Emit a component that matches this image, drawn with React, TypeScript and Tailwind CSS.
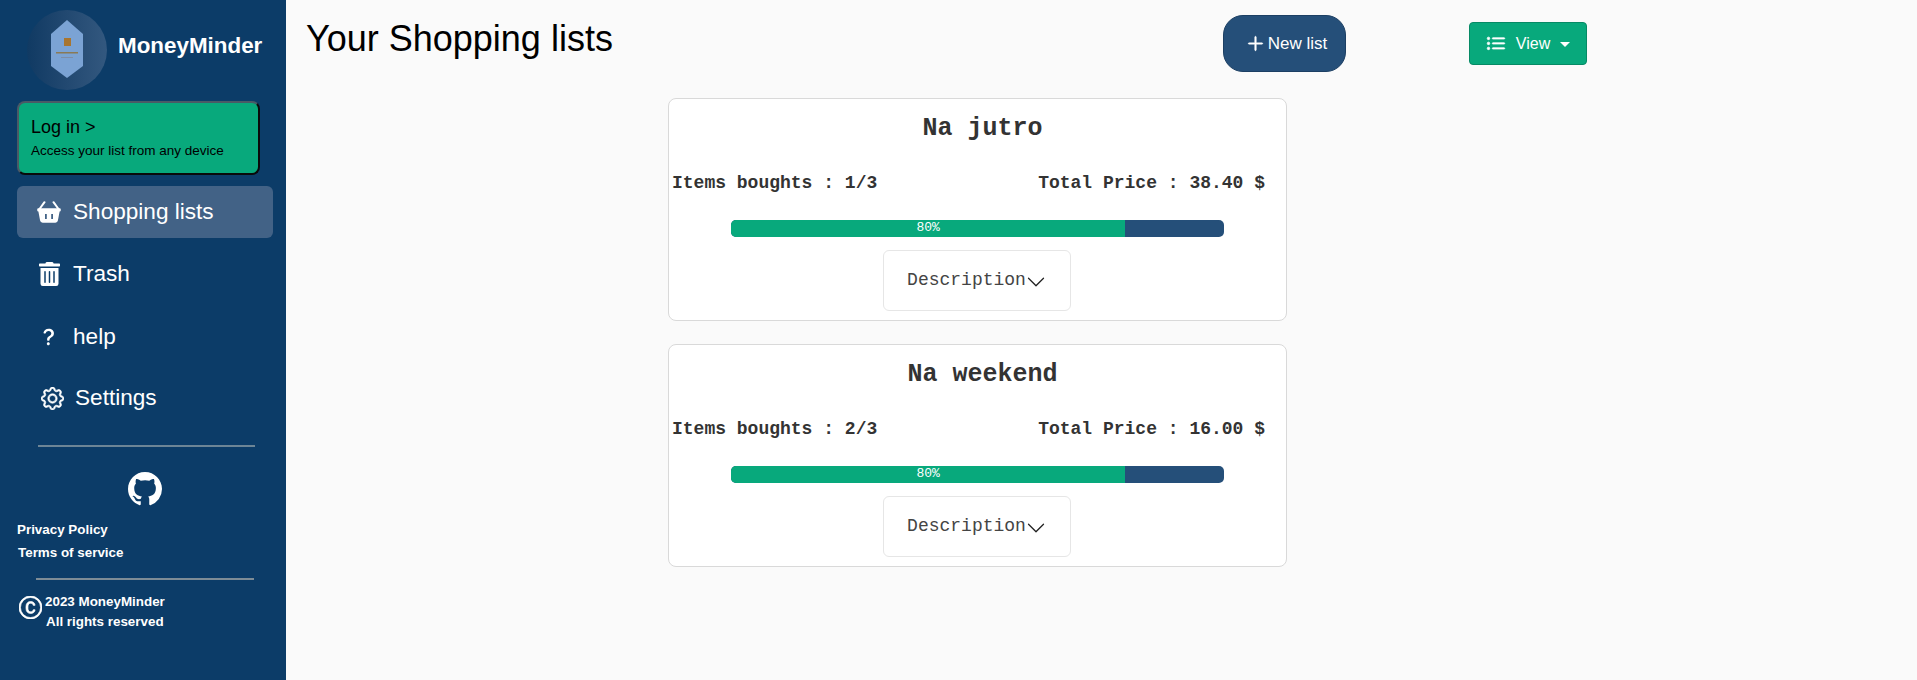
import { BsGear, BsPlusLg, BsListUl, BsChevronDown, BsGithub, BsCCircle, BsQuestionLg } from "react-icons/bs";
import { FaTrashAlt } from "react-icons/fa";

const lists = [
  { name: "Na jutro", items: "1/3", price: "38.40" },
  { name: "Na weekend", items: "2/3", price: "16.00" },
];

function BasketIcon() {
  return (
    <svg width="24" height="22" viewBox="0 0 24 22" fill="none">
      <path d="M2.5 8 L7.5 1.2 M21.5 8 L16.5 1.2" stroke="white" strokeWidth="2" strokeLinecap="round" />
      <path
        fillRule="evenodd"
        fill="white"
        d="M1.5 7.2 H22.5 A1.3 1.3 0 0 1 23.8 8.5 V9.2 A1.3 1.3 0 0 1 22.6 10.5 L20.9 19.6 A2.6 2.6 0 0 1 18.4 21.8 H5.6 A2.6 2.6 0 0 1 3.1 19.6 L1.4 10.5 A1.3 1.3 0 0 1 0.2 9.2 V8.5 A1.3 1.3 0 0 1 1.5 7.2 Z M8 13 H9.8 V18 H8 Z M14.2 13 H16 V18 H14.2 Z"
      />
    </svg>
  );
}

function Card({ name, items, price }: { name: string; items: string; price: string }) {
  return (
    <div className="w-[619px] h-[223px] bg-white border border-[#d9d9d9] rounded-[8px] flex flex-col items-center text-[#333] font-['Liberation_Mono',monospace]">
      <div className="mt-[15px] pl-[10px] h-[30px] leading-[30px] text-[25px] font-bold">{name}</div>
      <div className="mt-[28px] w-full h-[22px] leading-[22px] flex justify-between pl-[3px] pr-[21px] text-[18px] font-bold">
        <span>Items boughts : {items}</span>
        <span>Total Price : {price} $</span>
      </div>
      <div className="mt-[26px] w-[493px] h-[17px] rounded-[5px] overflow-hidden bg-[#254f79] flex">
        <div className="w-[80%] bg-[#08a97c] text-white text-[13px] leading-[15px] text-center">80%</div>
      </div>
      <div className="mt-[13px] mr-[2px] w-[188px] h-[61px] border border-[#e6e6e6] rounded-[6px] flex items-center justify-center text-[18px] text-[#444]">
        <span>Description</span>
        <BsChevronDown className="w-[20px] h-[20px] mt-[2px] text-[#222]" />
      </div>
    </div>
  );
}

function NavItem({ icon, label, active }: { icon: React.ReactNode; label: string; active?: boolean }) {
  return (
    <div className={`ml-[17px] w-[256px] h-[52px] rounded-[6px] flex items-center text-white text-[22.6px] ${active ? "bg-[#426286]" : ""}`}>
      <div className="w-[56px] flex justify-center pl-[8px]">{icon}</div>
      <span className="leading-[28px]">{label}</span>
    </div>
  );
}

export default function App() {
  return (
    <div className="flex w-[1917px] h-[680px] overflow-hidden bg-[#fafafa] font-['Liberation_Sans',Arial,sans-serif]">
      <aside className="w-[286px] h-full bg-[#0c3c68] flex flex-col shrink-0">
        <div className="flex items-center h-[101px] pl-[27px] pb-[2px]">
          <div className="w-[80px] h-[80px] rounded-full bg-gradient-to-r from-[#103a63] to-[#33587f] flex items-center justify-center shrink-0">
            <svg width="34" height="60" viewBox="0 0 34 60">
              <polygon points="17,0 33,14 33,46 17,58 1,46 1,14" fill="#7ba3d4" />
              <rect x="14" y="18" width="7" height="8" fill="#a8752f" />
              <rect x="6" y="32" width="22" height="1.5" fill="#8a7a55" />
              <rect x="11" y="37" width="12" height="1" fill="#7d8ea8" />
            </svg>
          </div>
          <span className="ml-[11px] mb-[7px] text-white text-[22.4px] font-bold">MoneyMinder</span>
        </div>
        <div className="ml-[17px] w-[243px] h-[74px] rounded-[8px] bg-[#08a97c] border-2 border-t-[#4a5a66] border-l-[#4a5a66] border-r-[#0a0a0a] border-b-[#0a0a0a] px-[12px] pt-[13px] text-black">
          <div className="text-[18px] leading-[22px]">Log in &gt;</div>
          <div className="text-[13.5px] leading-[16px] mt-[5px]">Access your list from any device</div>
        </div>
        <div className="mt-[11px]">
          <NavItem active icon={<BasketIcon />} label="Shopping lists" />
          <div className="h-[10px]" />
          <NavItem icon={<FaTrashAlt className="w-[21px] h-[24px]" />} label="Trash" />
          <div className="h-[11px]" />
          <NavItem icon={<BsQuestionLg className="w-[22px] h-[22px]" />} label="help" />
          <div className="h-[9px]" />
          <div className="ml-[17px] w-[256px] h-[52px] flex items-center text-white text-[22.6px]">
            <div className="w-[58px] flex justify-center pl-[12px]"><BsGear className="w-[23px] h-[23px] [stroke-width:0.5px]" /></div>
            <span>Settings</span>
          </div>
        </div>
        <div className="mt-[21px] ml-[38px] w-[217px] h-[2px] bg-[#6d8596]" />
        <div className="mt-[25px] flex justify-center pl-[3px]"><BsGithub className="w-[34px] h-[34px] text-white" /></div>
        <div className="mt-[12px] ml-[17px] text-white text-[13.4px] font-bold leading-[23px]">
          <div>Privacy Policy</div>
          <div className="ml-[1px]">Terms of service</div>
        </div>
        <div className="mt-[14px] ml-[36px] w-[218px] h-[2px] bg-[#7e8c96]" />
        <div className="mt-[12px] ml-[19px] flex text-white text-[13.4px] font-bold leading-[20px]">
          <BsCCircle className="w-[23px] h-[23px] mt-[4px] [stroke-width:0.5px]" />
          <div className="ml-[3px]">
            <div>2023 MoneyMinder</div>
            <div className="ml-[1px]">All rights reserved</div>
          </div>
        </div>
      </aside>
      <main className="flex-1 flex flex-col">
        <div className="h-[98px] flex items-start pl-[20px]">
          <h1 className="w-[917px] mt-[18px] text-[36px] leading-[42px] text-black">Your Shopping lists</h1>
          <button className="mt-[15px] w-[123px] h-[57px] rounded-[20px] bg-[#254f79] border border-[#1c3f63] text-white text-[17px] flex items-center justify-center pl-[4px]">
            <BsPlusLg className="w-[19px] h-[19px] mr-[3px] [stroke-width:0.7px]" />New list
          </button>
          <button className="mt-[22px] ml-[123px] w-[118px] h-[43px] rounded-[4px] bg-[#08a97c] border border-[#068a65] text-white text-[16px] flex items-center justify-center">
            <BsListUl className="w-[20px] h-[20px] mr-[10px] [stroke-width:0.6px]" />View
            <span className="ml-[10px] mt-[1px] border-x-[5px] border-x-transparent border-t-[5px] border-t-white" />
          </button>
        </div>
        <div className="ml-[382px] flex flex-col gap-[23px]">
          {lists.map((l) => <Card key={l.name} {...l} />)}
        </div>
      </main>
    </div>
  );
}
